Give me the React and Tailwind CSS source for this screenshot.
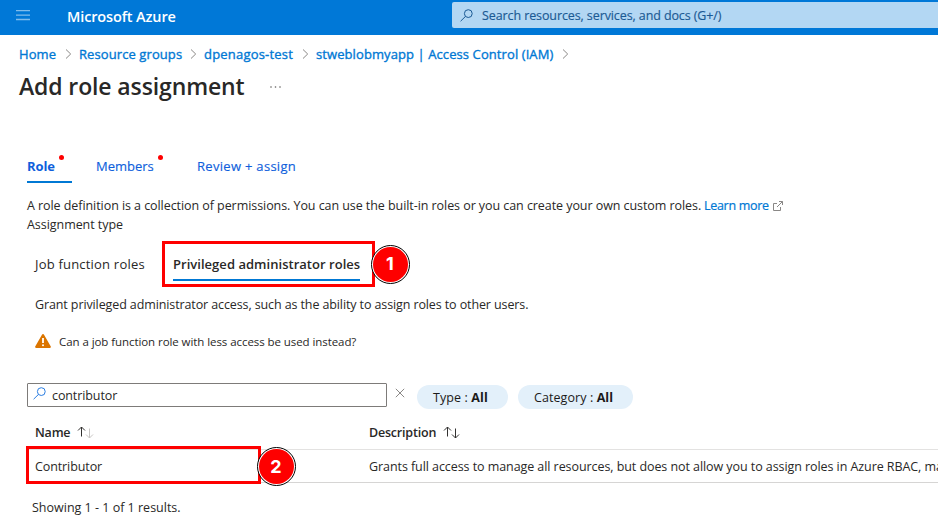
import React from "react";

const Chevron = () => (
  <svg width="7" height="10" viewBox="0 0 7 10" className="shrink-0" fill="none" stroke="#8a8886" strokeWidth="1">
    <path d="M1 .5 5.7 5 1 9.5" />
  </svg>
);

const SearchIcon = ({ color }) => (
  <svg width="13" height="13" viewBox="0 0 13 13" className="shrink-0" fill="none" stroke={color} strokeWidth="1">
    <circle cx="8.3" cy="4.6" r="3.9" />
    <path d="M5.5 7.4.6 12.2" />
  </svg>
);

const SortIcon = ({ down }) => (
  <svg width="17" height="13" viewBox="0 0 17 13" className="shrink-0" fill="none" strokeWidth="1">
    <path d="M4.5 10.5V1M1 4.5 4.5 1 8 4.5" stroke="#323130" />
    <path d="M12.5 2.5V12M9 8.5l3.5 3.5L16 8.5" stroke={down} />
  </svg>
);

const Marker = ({ n, place }) => (
  <div className={`absolute flex h-[39px] w-[39px] items-center justify-center rounded-full border border-black bg-white ${place}`}>
    <div className="flex h-[35px] w-[35px] items-center justify-center rounded-full bg-[#fe0000] font-['Inter',sans-serif] text-[18px] leading-none font-bold text-white">
      {n}
    </div>
  </div>
);

export default function App() {
  return (
    <div className="h-[522px] w-[938px] overflow-hidden bg-white font-['Open_Sans','Noto_Sans',sans-serif] text-[12.5px] leading-[19px] whitespace-nowrap text-[#292827]">
      <header className="flex h-[35px] items-start bg-[#0078d7]">
        <svg width="14" height="11" viewBox="0 0 14 11" className="mt-[10px] ml-4 shrink-0" stroke="#80bceb" strokeWidth="1.3">
          <path d="M0 .7h14M0 5.2h14M0 9.5h14" />
        </svg>
        <div className="mt-[7px] ml-[37px] w-[385px] text-[14.5px] font-semibold tracking-[-0.13px] text-white">Microsoft Azure</div>
        <div className="mt-[2px] flex h-[26px] flex-1 items-center rounded-l-[2px] bg-[#b3d7f3] pl-2 tracking-[-0.1px] text-[#1b5a94] [-webkit-text-stroke:0.15px_#1b5a94]">
          <SearchIcon color="#1b5a94" />
          <span className="ml-[9px]">Search resources, services, and docs (G+/)</span>
        </div>
      </header>

      <nav className="flex h-[38px] items-center pl-[19px] text-[13px] tracking-[0.09px] text-[#0078d4] [-webkit-text-stroke:0.35px_#0078d4]">
        <span className="w-[46px]">Home</span>
        <Chevron />
        <span className="ml-[7px] w-[111px]">Resource groups</span>
        <Chevron />
        <span className="ml-[7px] w-[98px] tracking-[0.2px]">dpenagos-test</span>
        <Chevron />
        <span className="ml-[7px] w-[246px]">stweblobmyapp | Access Control (IAM)</span>
        <Chevron />
      </nav>

      <div className="flex h-[28px] items-center pl-[19px]">
        <h1 className="-mt-[2px] w-[251px] text-[23px] leading-[28px] font-semibold tracking-[-0.12px]">Add role assignment</h1>
        <svg width="12" height="2" viewBox="0 0 12 2" fill="#605e5c">
          <circle cx="1" cy="1" r=".8" /><circle cx="5.5" cy="1" r=".8" /><circle cx="10" cy="1" r=".8" />
        </svg>
      </div>

      <div className="mt-[50px] flex h-[32px] pl-[27px] text-[13px] leading-[31px] text-[#0f5fdc]">
        <div className="relative w-[45px] border-b-2 border-[#0078d4] font-bold tracking-[-0.1px]">
          Role
          <i className="absolute top-[4px] left-[32px] h-[5px] w-[5px] rounded-full bg-[#fe0000]" />
        </div>
        <div className="relative ml-6 w-[77px] [-webkit-text-stroke:0.15px_#0f5fdc]">
          Members
          <i className="absolute top-[4px] left-[62px] h-[5px] w-[5px] rounded-full bg-[#fe0000]" />
        </div>
        <div className="ml-6 tracking-[0.3px] [-webkit-text-stroke:0.15px_#0f5fdc]">Review + assign</div>
      </div>

      <div className="mt-[13px] flex items-center pl-[27px]">
        <span className="w-[677px] tracking-[-0.065px]">A role definition is a collection of permissions. You can use the built-in roles or you can create your own custom roles.</span>
        <span className="w-[69px] tracking-[-0.3px] text-[#0078d4] [-webkit-text-stroke:0.2px_#0078d4]">Learn more</span>
        <svg width="10" height="10" viewBox="0 0 10 10" fill="none" stroke="#8a8886" strokeWidth="1">
          <path d="M4 2.5H.5v7h7V6M6 .5h3.5V4M9.5.5 4 6" />
        </svg>
      </div>
      <div className="pl-[27px] tracking-[-0.05px]">Assignment type</div>

      <div className="mt-[16px] flex h-[31px] pl-[35px] text-[13px] leading-[29px]">
        <div className="w-[138px] tracking-[0.2px]">Job function roles</div>
        <div className="relative w-[187px] border-b-2 border-[#0078d4] font-semibold tracking-[0.03px]">
          Privileged administrator roles
          <div className="absolute -top-[9px] -left-[11px] h-[46px] w-[213px] border-[3px] border-[#fe0000]" />
          <Marker n="1" place="-top-[5.5px] left-[197.5px]" />
        </div>
      </div>

      <p className="mt-[14px] pl-[35px] tracking-[-0.11px]">Grant privileged administrator access, such as the ability to assign roles to other users.</p>

      <div className="mt-[17px] flex h-[20px] items-center pl-[35px] text-[11.5px] tracking-[-0.07px]">
        <svg width="16" height="14" viewBox="0 0 16 14" className="-mt-px shrink-0">
          <path d="M7.1.6a1 1 0 0 1 1.8 0l6.9 12c.3.7 0 1.4-.8 1.4H1c-.8 0-1.1-.7-.8-1.4z" fill="#db7500" />
          <path d="M8 4v5" stroke="#fff" strokeWidth="1.8" /><circle cx="8" cy="11.3" r="1" fill="#fff" />
        </svg>
        <span className="ml-2">Can a job function role with less access be used instead?</span>
      </div>

      <div className="mt-[32px] flex h-[26px] items-start pl-[27px]">
        <div className="flex h-[24px] w-[360px] items-center rounded-[1px] border border-[#7d7b79] pl-[5px]">
          <div className="mb-[3px]"><SearchIcon color="#2a7de1" /></div>
          <span className="ml-[6px] tracking-[-0.1px]">contributor</span>
        </div>
        <svg width="10" height="10" viewBox="0 0 10 10" className="mt-[5px] ml-[8px]" stroke="#8a8886" strokeWidth="1">
          <path d="m.8.8 8.4 8.4M9.2.8.8 9.2" />
        </svg>
        <div className="mt-[2px] ml-[12px] h-[24px] w-[91px] rounded-full bg-[#e3f0fa] pl-[16px] leading-[25px] tracking-[0.1px] text-[#1b1a19]">Type : <b>All</b></div>
        <div className="mt-[2px] ml-[10px] h-[24px] w-[115px] rounded-full bg-[#e3f0fa] pl-[16px] leading-[25px] tracking-[0.08px] text-[#1b1a19]">Category : <b>All</b></div>
      </div>

      <div className="mt-[7px] ml-[27px] flex h-[34px] items-center border-b border-[#e3e2e1] pl-[8px] font-semibold tracking-[-0.2px]">
        <span className="w-[42px]">Name</span>
        <SortIcon down="#c8c6c4" />
        <span className="ml-[275px] w-[74px]">Description</span>
        <SortIcon down="#323130" />
      </div>
      <div className="relative ml-[27px] flex h-[33px] items-center border-b border-[#d6d5d4] pl-[8px]">
        <span className="w-[334px] shrink-0 tracking-[-0.1px]">Contributor</span>
        <span className="shrink-0 tracking-[-0.07px]">Grants full access to manage all resources, but does not allow you to assign roles in Azure RBAC, manage</span>
        <div className="absolute -top-[4px] -left-px h-[38px] w-[235px] border-[3px] border-[#fe0000]" />
        <Marker n="2" place="-top-[3px] left-[229.5px]" />
      </div>
      <div className="mt-[15px] pl-[32px]">Showing 1 - 1 of 1 results.</div>
    </div>
  );
}
